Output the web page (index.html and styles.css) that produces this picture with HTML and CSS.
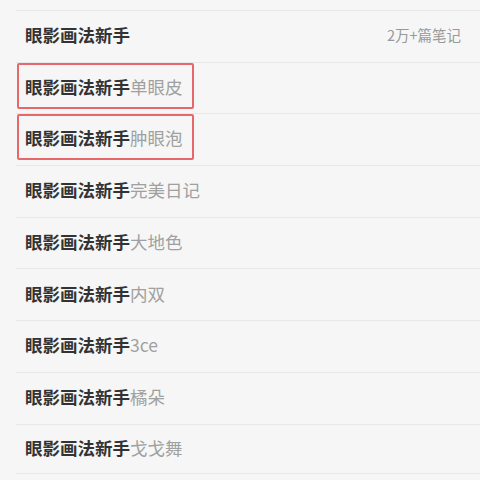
FILE: index.html
```html
<!DOCTYPE html>
<html lang="zh-CN">
<head>
    <meta charset="UTF-8">
    <meta name="viewport" content="width=device-width, initial-scale=1.0">
    <title>眼影画法新手</title>
    <link rel="stylesheet" href="styles.css">
</head>
<body>
    <ul class="suggest-list">
        <li class="suggest-item">
            <span class="keyword"><b>眼影画法新手</b></span>
            <span class="count">2万+篇笔记</span>
        </li>
        <li class="suggest-item">
            <span class="keyword marked"><b>眼影画法新手</b>单眼皮</span>
        </li>
        <li class="suggest-item">
            <span class="keyword marked"><b>眼影画法新手</b>肿眼泡</span>
        </li>
        <li class="suggest-item">
            <span class="keyword"><b>眼影画法新手</b>完美日记</span>
        </li>
        <li class="suggest-item">
            <span class="keyword"><b>眼影画法新手</b>大地色</span>
        </li>
        <li class="suggest-item">
            <span class="keyword"><b>眼影画法新手</b>内双</span>
        </li>
        <li class="suggest-item">
            <span class="keyword"><b>眼影画法新手</b>3ce</span>
        </li>
        <li class="suggest-item">
            <span class="keyword"><b>眼影画法新手</b>橘朵</span>
        </li>
        <li class="suggest-item">
            <span class="keyword"><b>眼影画法新手</b>戈戈舞</span>
        </li>
    </ul>
</body>
</html>
```

FILE: styles.css
```css
body {
    margin: 0;
    background: #f6f6f6;
    font-family: "Noto Sans CJK SC", "Noto Sans", sans-serif;
}

.suggest-list {
    list-style: none;
    margin: 10px 0 0 16px;
    padding: 0;
}

.suggest-item {
    display: flex;
    align-items: center;
    justify-content: space-between;
    box-sizing: border-box;
    height: 51.7px;
    padding: 0 19px 3px 9px;
    border-top: 1px solid #e8e8e8;
}

.suggest-item:last-child {
    height: 50px;
    border-bottom: 1px solid #e8e8e8;
}

.keyword {
    font-size: 17.5px;
    color: #a0a0a0;
}

.keyword b {
    color: #333;
    font-weight: 700;
}

.keyword.marked {
    align-self: flex-start;
    line-height: 38px;
    margin-left: -8px;
    padding: 3px 9px 1px 6px;
    border: 2px solid #e7686a;
    border-radius: 2px;
}

.count {
    font-size: 14.5px;
    color: #999;
}
```
